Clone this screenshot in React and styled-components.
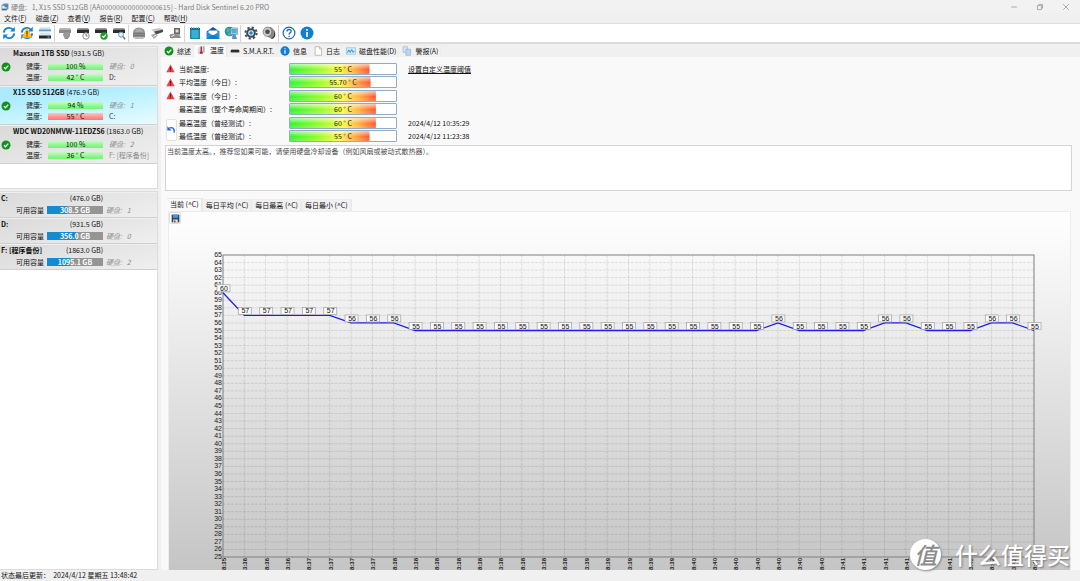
import React, { useLayoutEffect, useRef, useState } from "react";
import styled, { createGlobalStyle, css } from "styled-components";

const Global = createGlobalStyle`
  * { box-sizing: border-box; }
  body { margin: 0; background: #f0f0f0; overflow: hidden; }
  body, button, textarea {
    font-family: "Noto Sans CJK SC", "Noto Sans", sans-serif;
    font-size: 7px;
    line-height: 10px;
    color: #111;
  }
  button { border: 0; padding: 0; margin: 0; background: none; white-space: nowrap; }
  svg { display: block; flex: none; }
`;

const Window = styled.div`
  position: relative;
  display: flex;
  flex-direction: column;
  height: 100vh;
  white-space: nowrap;
`;

/* ---------- frame bars ---------- */

const TitleBar = styled.header`
  display: flex;
  align-items: center;
  height: 13px;
  padding: 0 1px;
  background: #f2f2f2;
  color: #808080;
`;
const TitleText = styled.h1`
  flex: 1;
  margin: 0;
  padding-left: 2px;
  font-size: 7px;
  font-weight: 400;
  white-space: pre;
`;
const WindowButton = styled.button`
  display: flex;
  justify-content: center;
  width: 26px;
`;
const MenuBar = styled.nav`
  display: flex;
  gap: 9px;
  height: 11px;
  padding: 0 4px;
  background: #f0f0f0;
  border-bottom: 1px solid #dedede;
`;
const MenuButton = styled.button`
  color: #222;
`;
const ToolBar = styled.div`
  display: flex;
  align-items: center;
  height: 20px;
  background: #fff;
  border-bottom: 2px solid #dcdcdc;
`;
const ToolButton = styled.button`
  display: flex;
  justify-content: center;
  width: 18px;
`;
const Separator = styled.span`
  width: 2px;
  height: 17px;
  border-left: 1px solid #d4d4d4;
`;
const StatusBar = styled.footer`
  height: 11px;
  padding: 0 1px;
  background: #f0f0f0;
  white-space: pre;
`;

/* ---------- left column ---------- */

const Body = styled.div`
  display: flex;
  flex: 1;
  min-height: 0;
`;
const Sidebar = styled.aside`
  display: flex;
  flex-direction: column;
  gap: 2px;
  width: 158px;
  padding-top: 2px;
`;
const List = styled.section`
  border: 1px solid #dcdcdc;
  border-left: 0;
  background: #fff;
  ${(p) => (p.$fill ? css`flex: 1; min-height: 0;` : css`height: 143px;`)}
`;
const Card = styled.article`
  height: ${(p) => (p.$volume ? 26 : 39)}px;
  border-bottom: 1px solid #cfcfcf;
  border-top: 1px solid #efefef;
  background: ${(p) =>
    p.$selected
      ? "linear-gradient(172deg, #abebfd 20%, #c4f4ff 55%, #e8fbff)"
      : "linear-gradient(165deg, #dadada, #e4e4e4 45%, #efefef)"};
`;
const CardTitle = styled.h2`
  margin: 0;
  padding-left: 13px;
  font-size: 7px;
  line-height: 10px;
  font-weight: 400;
  b { font-weight: 700; }
`;
const CardBody = styled.div`
  display: flex;
  align-items: center;
  height: 27px;
`;
const StateSlot = styled.span`
  display: flex;
  align-self: flex-start;
  width: 12px;
  padding: 4px 0 0 1px;
`;
const Metrics = styled.dl`
  display: grid;
  grid-template-columns: 30px 55px auto;
  grid-auto-rows: 11px;
  align-items: center;
  column-gap: 6px;
  margin: 0;
  dt { text-align: right; }
  dd { margin: 0; }
`;
const MetricBar = styled.dd`
  height: 7px;
  line-height: 7px;
  text-align: center;
  background: ${(p) =>
    p.$hot
      ? "linear-gradient(#ffc4c4, #ff9090 60%, #ff7878)"
      : "linear-gradient(#c2fdc2, #8df78d 60%, #74f274)"};
`;
const Note = styled.dd`
  color: ${(p) => (p.$dark ? "#333" : "#8a8a8a")};
  font-style: ${(p) => (p.$italic ? "italic" : "normal")};
  white-space: pre;
`;
const VolumeHead = styled.h2`
  display: flex;
  justify-content: space-between;
  width: 103px;
  margin: 0;
  padding-left: 1px;
  font-size: 7px;
  line-height: 10px;
  font-weight: 400;
`;
const VolumeRow = styled.div`
  display: grid;
  grid-template-columns: 44px 56px auto;
  align-items: center;
  column-gap: 3px;
  height: 14px;
  > :first-child { text-align: right; }
`;
const VolumeBar = styled.span`
  height: 8px;
  line-height: 8px;
  text-align: center;
  font-weight: 700;
  color: #fff;
  background: linear-gradient(90deg, #128bd0 ${(p) => p.$used}%, #959595 ${(p) => p.$used}%);
`;

/* ---------- right column ---------- */

const Main = styled.main`
  display: flex;
  flex: 1;
  flex-direction: column;
  min-width: 0;
  margin-left: 3px;
  background: #f9f9f9;
`;
const Tabs = styled.div`
  display: flex;
  align-items: flex-end;
  height: ${(p) => (p.$small ? 14 : 13)}px;
  ${(p) => (p.$small ? css`margin: 6px 0 0 6px;` : css`background: #f0f0f0;`)}
`;
const Tab = styled.button`
  display: flex;
  align-items: center;
  gap: 3px;
  height: ${(p) => (p.$on ? 13 : 12)}px;
  padding: ${(p) => (p.$on ? "0 3px 2px" : "0 3px")};
  background: ${(p) => (p.$on ? "#f9f9f9" : "#f1f1f1")};
  box-shadow: inset -1px 1px ${(p) => (p.$on ? "#e6e6e6" : "#ededed")};
`;
const ChartTab = styled(Tab)`
  border-right: 1px solid #e9e9e9;
`;
const Overview = styled.section`
  display: grid;
  grid-template-columns: 13px 110px 108px auto;
  grid-template-rows: repeat(3, 13px 14px);
  align-items: center;
  padding: 5px 0 0 5px;
`;
const AlertSlot = styled.span`
  grid-column: 1;
`;
const Gauge = styled.div`
  grid-column: 3;
  height: 12px;
  border: 1px solid #94abc6;
  border-radius: 1px;
  line-height: 11px;
  text-align: center;
  color: #222;
  background:
    linear-gradient(rgba(255, 255, 255, 0.65), rgba(255, 255, 255, 0.15) 45%, transparent 46%, rgba(255, 255, 255, 0.2)),
    linear-gradient(90deg, #2cf42c, #9dfb25 38%, #fdf83c 62%, #ffb03c 80%, #ff4f26) 0 0 / ${(p) => p.$level}% 100% no-repeat,
    #fff;
`;
const Label = styled.span`
  grid-column: 2;
`;
const Extra = styled.span`
  grid-column: 4;
  padding-left: 11px;
`;
const Link = styled.a`
  color: #111;
  text-decoration: underline;
  text-underline-offset: 1px;
`;
const ResetButton = styled.button`
  grid-column: 1;
  grid-row: 5 / 7;
  display: flex;
  align-items: center;
  justify-content: center;
  width: 11px;
  height: 22px;
  background: #fff;
  border: 1px solid #e2e2e2;
  border-radius: 2px;
`;
const Advice = styled.textarea`
  height: 46px;
  margin: 2px 8px 0 4px;
  padding: 0 1px;
  border: 1px solid #d4d4d4;
  background: #fff;
  color: #4a4a4a;
  resize: none;
  outline: 0;
  font-family: "Noto Sans CJK SC", sans-serif;
`;
const TabPage = styled.section`
  display: flex;
  flex: 1;
  flex-direction: column;
  min-height: 0;
  margin: 0 9px 0 7px;
  border: 1px solid #ececec;
  border-bottom: 0;
  background: linear-gradient(#fdfdfd 4%, #c5c5c5);
`;
const SaveButton = styled.button`
  display: flex;
  align-items: center;
  justify-content: center;
  width: 12px;
  height: 12px;
  background: #fff;
  border: 1px solid #dedede;
  border-radius: 2px;
`;
const ChartBox = styled.div`
  flex: 1;
  min-height: 0;
  overflow: hidden;
  svg { font-family: "Liberation Sans", sans-serif; font-size: 7px; }
`;
const TimeLabels = styled.g`
  font-size: 6px;
  font-weight: 700;
`;
const Watermark = styled.div`
  position: absolute;
  right: 10px;
  bottom: 11px;
  display: flex;
  align-items: center;
  gap: 14px;
  color: #fff;
  font-size: 23px;
  line-height: 32px;
  font-weight: 500;
  text-shadow: 1px 1px 2px #777;
`;
const WatermarkSeal = styled.span`
  width: 31px;
  height: 31px;
  border-radius: 50%;
  background: #fff;
  box-shadow: 1px 1px 2px #888;
  color: #8c8c8c;
  font-size: 23px;
  font-style: italic;
  line-height: 30px;
  text-align: center;
  text-shadow: none;
`;

/* ---------- icons ---------- */

const Svg = ({ s = 14, children }) => (
  <svg width={s} height={s} viewBox="0 0 14 14" aria-hidden="true">{children}</svg>
);
const Refresh = ({ warn }) => (
  <Svg>
    <g fill="none" stroke="#1487d4" strokeWidth="1.9">
      <path d="M1.8 6.6A5.2 5.2 0 0 1 10.8 3.6" />
      <path d="M12.2 7.4A5.2 5.2 0 0 1 3.2 10.4" />
    </g>
    <path d="M12.8.8v4.8H8zM1.2 13.2V8.400H6z" fill="#1487d4" />
    {warn && <><path d="M7 2.200L12 11.500H2z" fill="#ffc51f" stroke="#e9a400" strokeWidth=".6" /><path d="M7 5v3.600M7 9.300v1.200" stroke="#4a3600" strokeWidth="1.2" /></>}
  </Svg>
);
const Drives = () => (
  <Svg>
    <path d="M2 1.500h10l1 2H1z" fill="#d5d9dc" /><path d="M1 3.500h12v1.800H1z" fill="#4ba3dc" />
    <path d="M2 6.500h10l1 3H1z" fill="#e2e4e6" /><path d="M1 9.500h12v3H1z" fill="#20282e" />
    <path d="M9.500 11h2" stroke="#5bd0ff" />
  </Svg>
);
const DriveWith = ({ kind }) => (
  <Svg>
    <path d="M2 2h10l1 1.500H1z" fill={kind === "gray" ? "#b5b5b5" : "#9a9a9a"} />
    <path d="M1 3.500h12v3.500H1z" fill={kind === "gray" ? "#8a8a8a" : "#2d2d2d"} />
    {kind === "gray" && <><path d="M6 6h6v3l-2 4H7L5 9z" fill="#8f8f8f" /><circle cx="9" cy="9" r="3" fill="#999" /></>}
    {kind === "clock" && <><circle cx="10" cy="10" r="3.200" fill="#fff" stroke="#8b8b8b" /><path d="M10 8v2h1.600" fill="none" stroke="#555" strokeWidth=".8" /></>}
    {kind === "check" && <><circle cx="10" cy="10" r="3.700" fill="#1c9d2a" /><path d="M8.200 10l1.400 1.400 2.400-2.700" fill="none" stroke="#fff" strokeWidth="1.100" /></>}
    {kind === "search" && <><circle cx="9" cy="8.600" r="2.500" fill="#dff1ff" stroke="#7197b5" /><path d="M10.800 10.500l2.400 2.700" stroke="#777" strokeWidth="1.400" /></>}
  </Svg>
);
const Dome = () => (
  <Svg>
    <path d="M1 7a6 5.500 0 0 1 12 0v4.500H1z" fill="#909090" />
    <path d="M3 6a4 3.500 0 0 1 8 0z" fill="#aaa" /><path d="M1 7.500h12M1 9.500h12" stroke="#6f6f6f" strokeWidth=".8" />
    <path d="M2 11.500h10l-1 1.500H3z" fill="#bbb" />
  </Svg>
);
const Usb = ({ alt }) => (
  <Svg>
    <path d="M1 9l4-1.500 3 1.500-4 4z" fill="#a5a5a5" />
    <path d={alt ? "M6 2h6v6.500H6z" : "M1 3.500l9-1.500 3 1.500-9 2z"} fill={alt ? "#666" : "#c7c7c7"} />
    <path d={alt ? "M2 8.500h9l2 3.500H2z" : "M4 5.500l9-2v2.500L6 8.500z"} fill={alt ? "#8d8d8d" : "#4b4b4b"} />
    <path d="M3.500 10.500l3-1.500" stroke="#fff" strokeWidth=".9" />
    {alt && <path d="M7.500 3.500h3v3h-3z" fill="#ddd" />}
  </Svg>
);
const Notepad = () => (
  <Svg>
    <path d="M2 2h10v11H2z" fill="#1489b4" /><path d="M2 2h10v1.500H2z" fill="#0a5c7c" />
    <path d="M3.500 5h7M3.500 7h7M3.500 9h7M3.500 11h7" stroke="#6edcf0" strokeWidth=".9" />
    <path d="M3.500 1v2M5.800 1v2M8.200 1v2M10.500 1v2" stroke="#63aec4" strokeWidth=".9" />
  </Svg>
);
const Mail = () => (
  <Svg>
    <path d="M.5 5.500L7 1l6.500 4.500L7 9z" fill="#0d5ea6" /><path d="M2.500 4.500h9V7L7 9.500 2.500 7z" fill="#fff" />
    <path d="M.5 5.500L7 9.500l6.500-4V13H.5z" fill="#1f8fdd" /><path d="M.5 13L6 9h2l5.500 4z" fill="#147dcb" />
  </Svg>
);
const GlobeNet = () => (
  <Svg>
    <circle cx="5.500" cy="5.500" r="4.800" fill="#2387d8" /><path d="M3 2l3 1-1 3-2.500.5zM4 7l3-1v3.500H4z" fill="#58bd4a" />
    <path d="M6.500 2h7v6.500h-7z" fill="#dfe5ea" stroke="#69737c" strokeWidth=".6" /><path d="M7.300 2.800h5.400v4.700H7.300z" fill="#3cb1ec" />
    <path d="M8.500 8.500h3l1.500 4.500H8z" fill="#5f8fc9" />
  </Svg>
);
const Gear = () => (
  <Svg>
    <circle cx="7" cy="7" r="5.600" fill="none" stroke="#3e4c5a" strokeWidth="2" strokeDasharray="2.200 2.200" />
    <circle cx="7" cy="7" r="3.800" fill="#e8f3fb" stroke="#3e4c5a" strokeWidth="2" /><circle cx="7" cy="7" r="1.800" fill="#2583c8" />
  </Svg>
);
const Speaker = () => (
  <Svg>
    <path d="M4 1.500L9 1l4 4v5l-3 3-4-2z" fill="#8b8b8b" />
    <ellipse cx="5.500" cy="5.800" rx="4.400" ry="4.700" fill="#c9c9c9" stroke="#666" strokeWidth=".7" />
    <circle cx="5.500" cy="5.800" r="2.300" fill="#4b4b4b" /><path d="M9.500 12.500C12.500 12 13 9 12.500 6.500" fill="none" stroke="#333" strokeWidth="1.200" />
  </Svg>
);
const Help = () => (
  <Svg>
    <circle cx="7" cy="7" r="5.900" fill="#fff" stroke="#1767c4" strokeWidth="1.200" />
    <path d="M5 5.500C5 2.800 9.200 2.900 9.200 5.300 9.200 6.800 7.100 6.900 7.100 8.600M7.100 9.700v1.300" fill="none" stroke="#1767c4" strokeWidth="1.300" />
  </Svg>
);
const Info = ({ s }) => (
  <Svg s={s}><circle cx="7" cy="7" r="6.500" fill="#0f80d0" /><path d="M7 6v5M7 3v1.700" stroke="#fff" strokeWidth="1.600" /></Svg>
);
const Ok = ({ s = 10 }) => (
  <Svg s={s}><circle cx="7" cy="7" r="6.300" fill="#10911d" /><path d="M4 7.200l2.200 2.200L10.200 5" fill="none" stroke="#fff" strokeWidth="1.800" /></Svg>
);
const Alert = () => (
  <Svg s={9}><path d="M7 .8L13.500 13H.5z" fill="#ee3f4a" /><path d="M7 4.500v4.300M7 10v1.600" stroke="#5d0d14" strokeWidth="1.600" /></Svg>
);
const Thermo = () => (
  <Svg s={10}><path d="M2 4l2-2 7-1v10l-7 2H1z" fill="#cfd8e2" /><path d="M6 2v7" stroke="#c32a2a" strokeWidth="2" /><circle cx="6" cy="10.500" r="2.200" fill="#c32a2a" /><path d="M9.500 2v8" stroke="#7b8794" /></Svg>
);
const Dash = () => <Svg s={10}><path d="M1 5.500h12v3.500H1z" fill="#2b2b2b" /><path d="M2 5h10" stroke="#888" /></Svg>;
const Page = () => <Svg s={10}><path d="M3 1h6l3 3v9H3z" fill="#fff" stroke="#a8a8a8" /><path d="M9 1v3h3" fill="none" stroke="#a8a8a8" /></Svg>;
const Perf = () => <Svg s={10}><path d="M.5 2.500h13v9H.5z" fill="#d9f0ff" stroke="#7fbde6" /><path d="M2 9.500l2-4 2 3.500 2-4 2 4 2-2.500" fill="none" stroke="#1f84c9" strokeWidth="1.300" /></Svg>;
const Pages = () => <Svg s={10}><path d="M1.500 1h6v8h-6z" fill="#d5e6f7" stroke="#9bb7d3" /><path d="M5.500 4.500h6.500v8.500H5.500z" fill="#b9d7f4" stroke="#8fb2d6" /></Svg>;
const Undo = () => <Svg s={9}><path d="M3.500 5C8 2.500 12.500 5.500 11 12" fill="none" stroke="#2a63d8" strokeWidth="2.200" /><path d="M.5 2v6.500h6.500z" fill="#2a63d8" /></Svg>;
const Floppy = () => <Svg s={9}><path d="M1 1h12v12H1z" fill="#39424c" /><path d="M3 1h8v5H3z" fill="#3d9be0" /><path d="M3.500 8.500h7V13h-7z" fill="#e5e5e5" /><path d="M5 10h2v3H5z" fill="#39424c" /></Svg>;
const AppIcon = () => <Svg s={8}><path d="M1 4l4-3h8v8l-3 4H1z" fill="#77909f" /><path d="M2 5h8v5H2z" fill="#d6eefb" /><circle cx="9" cy="5" r="3" fill="#2f8fc7" /><path d="M2 11h8" stroke="#245a7c" strokeWidth="1.500" /></Svg>;
const Minimize = () => <Svg s={8}><path d="M2 7h10" stroke="#999" strokeWidth="1.400" /></Svg>;
const Restore = () => <Svg s={8}><path d="M2.500 4.500h7v7h-7zM5 4V2.500h6.500V9H10" fill="none" stroke="#999" strokeWidth="1.400" /></Svg>;
const Close = () => <Svg s={8}><path d="M2 2l10 10M12 2L2 12" stroke="#999" strokeWidth="1.400" /></Svg>;

/* ---------- data ---------- */

const menus = [["文件", "F"], ["磁盘", "Z"], ["查看", "V"], ["报告", "R"], ["配置", "C"], ["帮助", "H"]];
const toolGroups = [
  [["刷新", <Refresh />], ["强制刷新", <Refresh warn />], ["磁盘列表", <Drives />]],
  [["停止", <DriveWith kind="gray" />], ["定时测试", <DriveWith kind="clock" />], ["快速测试", <DriveWith kind="check" />], ["表面测试", <DriveWith kind="search" />]],
  [["休眠", <Dome />], ["移除", <Usb />], ["外接磁盘", <Usb alt />]],
  [["报告", <Notepad />], ["发送邮件", <Mail />], ["网络", <GlobeNet />]],
  [["配置", <Gear />], ["声音", <Speaker />]],
  [["帮助", <Help />], ["关于", <Info />]],
];
const disks = [
  { name: "Maxsun 1TB SSD", size: "931.5 GB", health: 100, temp: 42, no: 0, drive: "D:" },
  { name: "X15 SSD 512GB", size: "476.9 GB", health: 94, temp: 55, no: 1, drive: "C:", hot: true },
  { name: "WDC WD20NMVW-11EDZS6", size: "1863.0 GB", health: 100, temp: 36, no: 2, drive: "F:", label: "[程序备份]" },
];
const volumes = [
  { name: "C:", size: "476.0 GB", free: "308.5 GB", used: 35, no: 1 },
  { name: "D:", size: "931.5 GB", free: "356.0 GB", used: 51, no: 0 },
  { name: "F: [程序备份]", size: "1863.0 GB", free: "1095.1 GB", used: 41, no: 2 },
];
const tabs = [
  ["综述", <Ok />], ["温度", <Thermo />], ["S.M.A.R.T.", <Dash />], ["信息", <Info s={10} />],
  ["日志", <Page />], ["磁盘性能(D)", <Perf />], ["警报(A)", <Pages />],
];
const readings = [
  { label: "当前温度:", value: "55", level: 75, alert: true, extra: <Link href="#threshold">设置自定义温度阈值</Link> },
  { label: "平均温度（今日）:", value: "55.70", level: 76, alert: true },
  { label: "最高温度（今日）:", value: "60", level: 81, alert: true },
  { label: "最高温度（整个寿命周期间）:", value: "60", level: 81 },
  { label: "最高温度（曾经测试）:", value: "60", level: 81, reset: true, extra: "2024/4/12 10:35:29" },
  { label: "最低温度（曾经测试）:", value: "55", level: 75, extra: "2024/4/12 11:23:38" },
];
const chartTabs = ["当前 (^C)", "每日平均 (^C)", "每日最高 (^C)", "每日最小 (^C)"];

const repeat = (n, v) => Array(n).fill(v);
const temps = [
  60, ...repeat(5, 57), ...repeat(3, 56), ...repeat(17, 55), 56, ...repeat(4, 55),
  56, 56, ...repeat(3, 55), 56, 56, 55,
];
const minutes = [
  35, ...repeat(3, 36), ...repeat(4, 37), ...repeat(9, 38),
  ...repeat(5, 39), ...repeat(7, 40), ...repeat(6, 41), ...repeat(4, 42),
];
const times = minutes.map((m, i) => `${i % 2 ? 3 : 8}:${m}`);

/* ---------- chart ---------- */

const MAX = 65;
const MIN = 25;

function Chart() {
  const box = useRef(null);
  const [size, setSize] = useState({ w: 900, h: 346 });
  useLayoutEffect(() => {
    const read = () => setSize({ w: box.current.clientWidth, h: box.current.clientHeight });
    read();
    const observer = new ResizeObserver(read);
    observer.observe(box.current);
    return () => observer.disconnect();
  }, []);

  const left = 54;
  const right = size.w - 36;
  const top = 31;
  const bottom = size.h - 13;
  const x = (i) => left + ((right - left) * i) / (temps.length - 1);
  const y = (t) => top + ((bottom - top) * (MAX - t)) / (MAX - MIN);
  const scale = Array.from({ length: MAX - MIN + 1 }, (_, i) => MAX - i);

  return (
    <ChartBox ref={box}>
      <svg width={size.w} height={size.h} role="img" aria-label="当前温度">
        <g stroke="#000" strokeOpacity=".1" strokeDasharray="3 1">
          {scale.map((t) => <line key={t} x1={left} x2={right} y1={y(t)} y2={y(t)} />)}
          {temps.map((_, i) => <line key={i} x1={x(i)} x2={x(i)} y1={top} y2={bottom} />)}
        </g>
        <rect x={left} y={top} width={right - left} height={bottom - top} fill="none" stroke="#888" />
        <g textAnchor="end" fill="#222">
          {scale.map((t) => <text key={t} x={left - 1} y={y(t) + 2}>{t}</text>)}
        </g>
        <TimeLabels textAnchor="end" fill="#222">
          {times.map((t, i) => (
            <text key={i} transform={`translate(${x(i) + 3} ${bottom + 1}) rotate(-90)`}>{t}</text>
          ))}
        </TimeLabels>
        <polyline points={temps.map((t, i) => `${x(i)},${y(t)}`).join(" ")} fill="none" stroke="#1c1cf0" strokeWidth="1.300" />
        {temps.map((t, i) => (
          <g key={i}>
            <rect x={x(i) - 6} y={y(t) - 8} width="13" height="7" fill="#fafafa" stroke="#aaa" strokeWidth=".8" />
            <text x={x(i) + 1} y={y(t) - 2} textAnchor="middle" fill="#111">{t}</text>
          </g>
        ))}
      </svg>
    </ChartBox>
  );
}

export default function App() {
  return (
    <Window>
      <Global />
      <TitleBar>
        <AppIcon />
        <TitleText>{"硬盘:   1, X15 SSD 512GB [AA000000000000000615] - Hard Disk Sentinel 6.20 PRO"}</TitleText>
        <WindowButton aria-label="最小化"><Minimize /></WindowButton>
        <WindowButton aria-label="还原"><Restore /></WindowButton>
        <WindowButton aria-label="关闭"><Close /></WindowButton>
      </TitleBar>
      <MenuBar>
        {menus.map(([name, key]) => <MenuButton key={key}>{name}(<u>{key}</u>)</MenuButton>)}
      </MenuBar>
      <ToolBar>
        {toolGroups.map((group, g) => (
          <React.Fragment key={g}>
            {g > 0 && <Separator />}
            {group.map(([name, icon]) => <ToolButton key={name} aria-label={name}>{icon}</ToolButton>)}
          </React.Fragment>
        ))}
      </ToolBar>

      <Body>
        <Sidebar>
          <List>
            {disks.map((d) => (
              <Card key={d.no} $selected={d.hot}>
                <CardTitle><b>{d.name}</b> ({d.size})</CardTitle>
                <CardBody>
                  <StateSlot><Ok /></StateSlot>
                  <Metrics>
                    <dt>健康:</dt>
                    <MetricBar>{d.health} %</MetricBar>
                    <Note $italic>{`硬盘:   ${d.no}`}</Note>
                    <dt>温度:</dt>
                    <MetricBar $hot={d.hot}>{d.temp} ° C</MetricBar>
                    <Note $dark={!d.label}>{d.drive} {d.label}</Note>
                  </Metrics>
                </CardBody>
              </Card>
            ))}
          </List>
          <List $fill>
            {volumes.map((v) => (
              <Card key={v.name} $volume>
                <VolumeHead><b>{v.name}</b><span>({v.size})</span></VolumeHead>
                <VolumeRow>
                  <span>可用容量</span>
                  <VolumeBar $used={v.used}>{v.free}</VolumeBar>
                  <Note as="span" $italic>{`硬盘:   ${v.no}`}</Note>
                </VolumeRow>
              </Card>
            ))}
          </List>
        </Sidebar>

        <Main>
          <Tabs>
            {tabs.map(([name, icon]) => <Tab key={name} $on={name === "温度"}>{icon}{name}</Tab>)}
          </Tabs>
          <Overview>
            {readings.map((r) => (
              <React.Fragment key={r.label}>
                {r.alert && <AlertSlot><Alert /></AlertSlot>}
                {r.reset && <ResetButton aria-label="重置"><Undo /></ResetButton>}
                <Label>{r.label}</Label>
                <Gauge $level={r.level}>{r.value} ° C</Gauge>
                {r.extra && <Extra>{r.extra}</Extra>}
              </React.Fragment>
            ))}
          </Overview>
          <Advice
            readOnly
            aria-label="建议"
            value="当前温度太高。，推荐您如果可能，请使用硬盘冷却设备（例如风扇或被动式散热器）。"
          />
          <Tabs $small>
            {chartTabs.map((name, i) => <ChartTab key={name} $on={i === 0}>{name}</ChartTab>)}
          </Tabs>
          <TabPage>
            <SaveButton aria-label="保存"><Floppy /></SaveButton>
            <Chart />
          </TabPage>
        </Main>
      </Body>

      <StatusBar>{"状态最后更新：  2024/4/12 星期五 13:48:42"}</StatusBar>
      <Watermark>
        <WatermarkSeal>值</WatermarkSeal>
        <span>什么值得买</span>
      </Watermark>
    </Window>
  );
}
